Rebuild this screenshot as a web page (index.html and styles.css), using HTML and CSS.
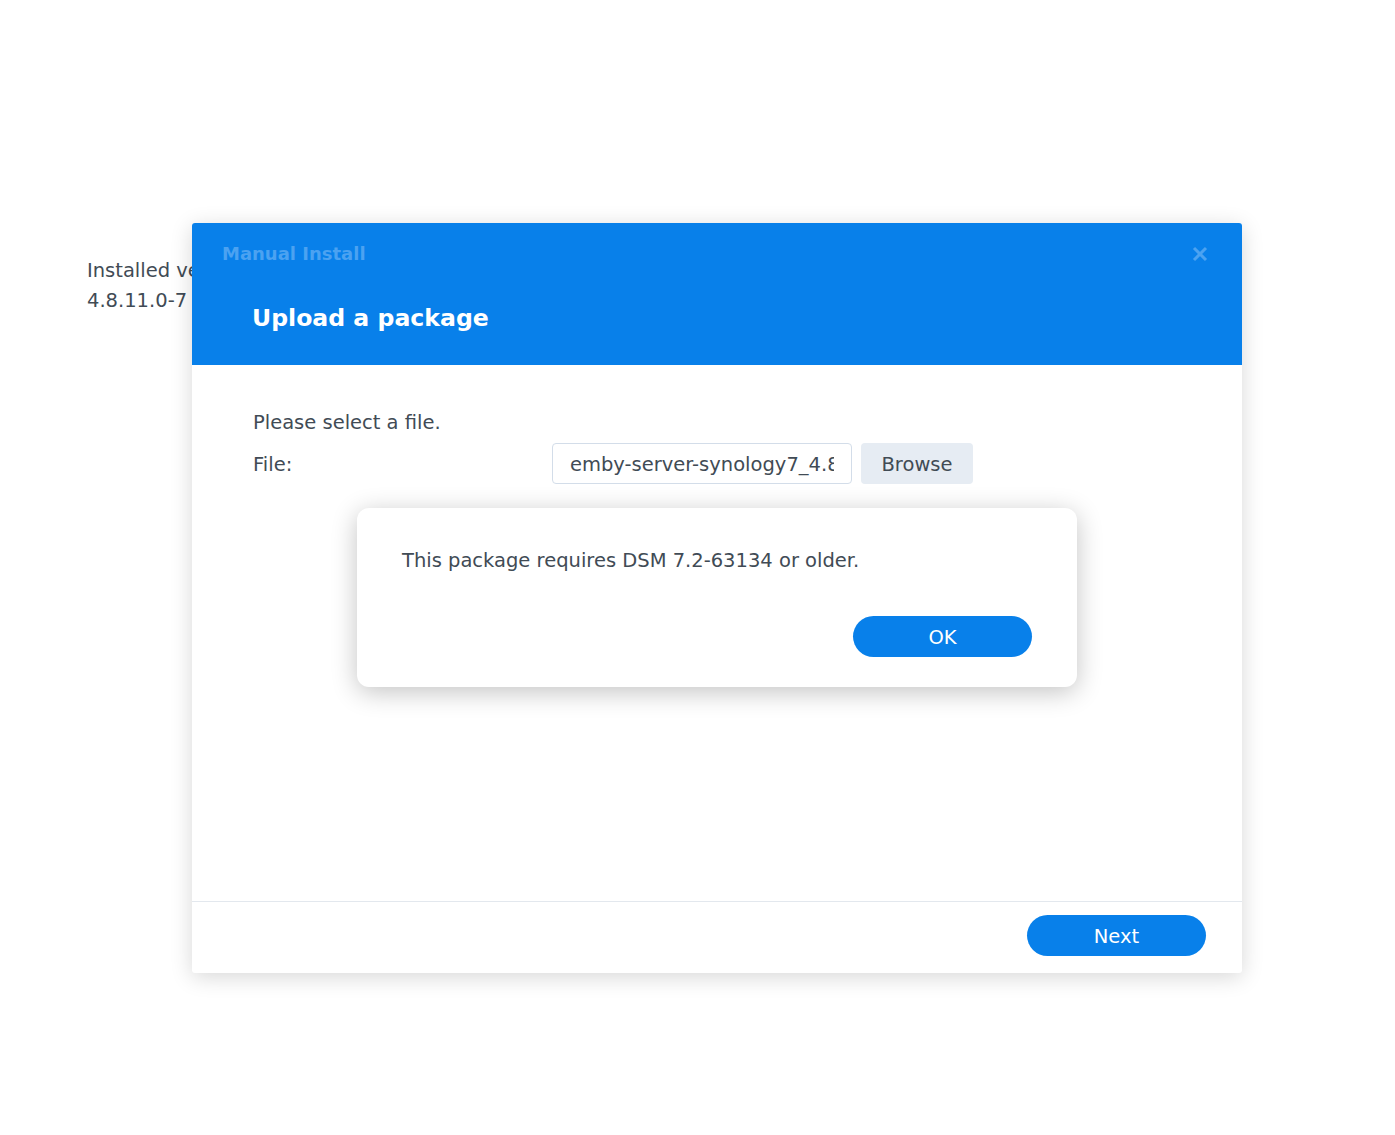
FILE: index.html
```html
<!DOCTYPE html>
<html>
<head>
<meta charset="utf-8">
<link rel="stylesheet" href="styles.css">
</head>
<body>
<div class="page">
  <div class="bg-info">
    <div class="bg-line">Installed version:</div>
    <div class="bg-line">4.8.11.0-7</div>
  </div>

  <div class="window">
    <div class="win-header">
      <div class="win-top">
        <span class="win-app">Manual Install</span>
        <svg class="win-close" width="18" height="18" viewBox="0 0 18 18">
          <path d="M3 3 L15 15 M15 3 L3 15" stroke="currentColor" stroke-width="3" stroke-linecap="butt" fill="none"/>
        </svg>
      </div>
      <div class="win-title">Upload a package</div>
    </div>
    <div class="win-body">
      <div class="body-text">Please select a file.</div>
      <div class="file-row">
        <span class="file-label">File:</span>
        <div class="file-input"><div class="file-value">emby-server-synology7_4.8.11.0-x86_64.spk</div></div>
        <button class="btn-browse">Browse</button>
      </div>
    </div>
    <div class="win-footer">
      <button class="btn-primary">Next</button>
    </div>

    <div class="alert">
      <div class="alert-text">This package requires DSM 7.2-63134 or older.</div>
      <div class="alert-actions">
        <button class="btn-primary">OK</button>
      </div>
    </div>
  </div>
</div>
</body>
</html>
```

FILE: styles.css
```css
* { box-sizing: border-box; }

html, body {
  margin: 0;
  padding: 0;
  background: #ffffff;
}

body {
  font-family: "DejaVu Sans", Verdana, sans-serif;
  font-size: 19.5px;
  color: #414b55;
}

.page {
  position: relative;
  width: 1395px;
  height: 1135px;
  overflow: hidden;
}

.bg-info {
  padding: 256px 0 0 87px;
}

.bg-line {
  line-height: 30px;
  white-space: nowrap;
}

.window {
  position: absolute;
  left: 192px;
  top: 223px;
  width: 1050px;
  height: 750px;
  background: #ffffff;
  border-radius: 3px;
  box-shadow: 0 4px 22px rgba(0, 0, 0, 0.16);
  display: flex;
  flex-direction: column;
  overflow: hidden;
}

.win-header {
  height: 142px;
  background: #0880ea;
  padding: 19px 30px 0 30px;
}

.win-top {
  display: flex;
  justify-content: space-between;
  align-items: center;
  height: 24px;
}

.win-app {
  font-weight: bold;
  font-size: 18px;
  line-height: 24px;
  color: #4ba2f1;
}

.win-close {
  color: #4ba2f1;
  margin-right: 3px;
}

.win-title {
  margin-top: 36px;
  padding-left: 30px;
  font-weight: bold;
  font-size: 23.6px;
  line-height: 32px;
  color: #ffffff;
}

.win-body {
  flex: 1;
  padding: 46px 61px 0 61px;
}

.body-text {
  line-height: 24px;
}

.file-row {
  margin-top: 8px;
  display: flex;
  align-items: center;
  height: 41px;
}

.file-label {
  width: 299px;
  padding-top: 1px;
}

.file-input {
  width: 300px;
  height: 41px;
  border: 1px solid #d3dde9;
  border-radius: 4px;
  padding: 2px 17px 0 17px;
  line-height: 37px;
}

.file-value {
  white-space: nowrap;
  overflow: hidden;
}

.btn-browse {
  margin-left: 9px;
  width: 112px;
  height: 41px;
  border: none;
  border-radius: 4px;
  background: #e6ecf3;
  font-family: inherit;
  font-size: 19.5px;
  color: #414b55;
  padding: 2px 0 0 0;
}

.win-footer {
  height: 72px;
  border-top: 1px solid #e3e8ee;
  padding: 13px 36px 0 0;
  display: flex;
  justify-content: flex-end;
  align-items: flex-start;
}

.btn-primary {
  width: 179px;
  height: 41px;
  border: none;
  border-radius: 21px;
  background: #0880ea;
  color: #ffffff;
  font-family: inherit;
  font-size: 19.5px;
  padding: 2px 0 0 0;
}

.alert {
  position: absolute;
  left: 165px;
  top: 285px;
  width: 720px;
  height: 179px;
  background: #ffffff;
  border-radius: 12px;
  box-shadow: 0 5px 26px rgba(0, 0, 0, 0.24);
  padding: 41px 45px 30px 45px;
  display: flex;
  flex-direction: column;
}

.alert-text {
  line-height: 24px;
}

.alert-actions {
  margin-top: auto;
  display: flex;
  justify-content: flex-end;
}
```
